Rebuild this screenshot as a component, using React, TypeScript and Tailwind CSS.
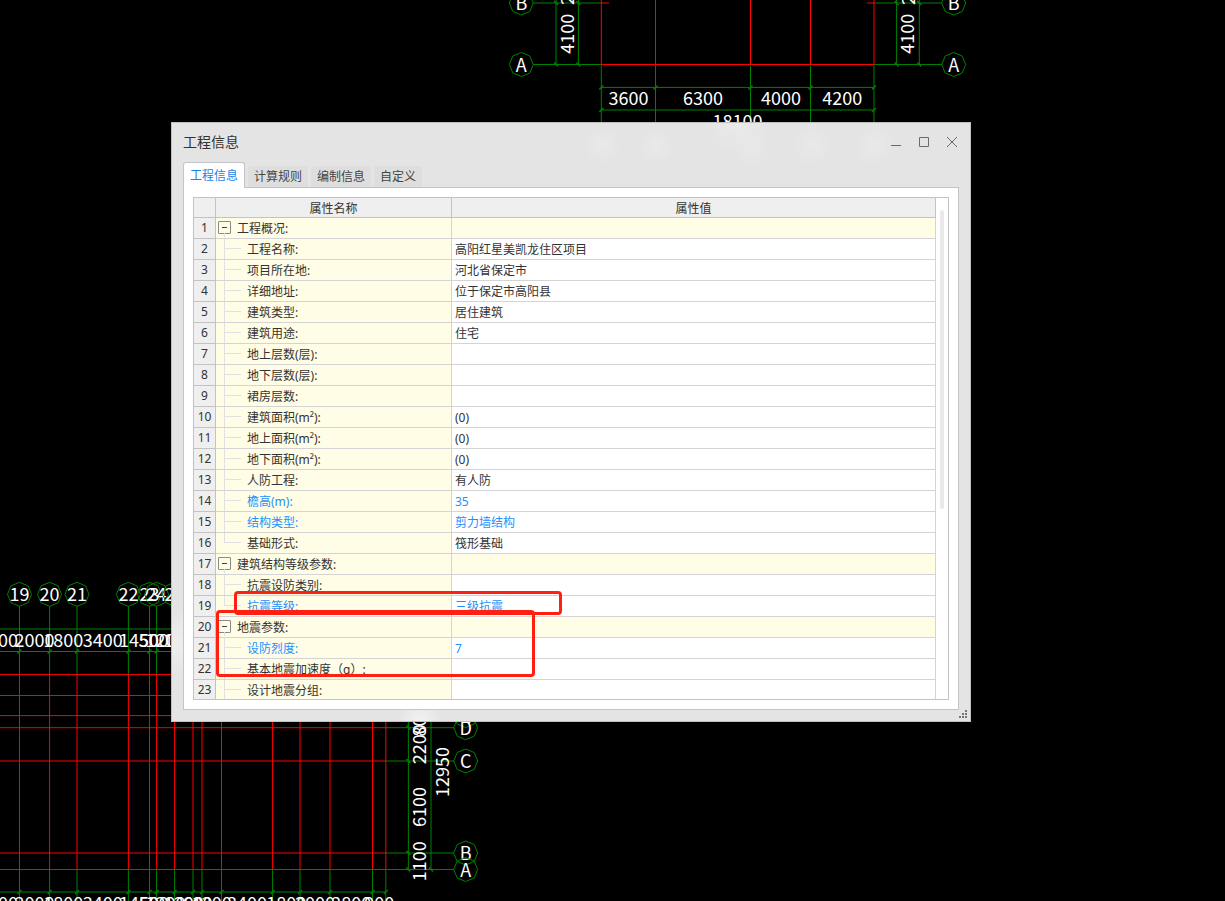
import { useState } from 'react'
import { clsx } from 'clsx'

interface PropertyRow {
  label: string
  value?: string
  group?: boolean
  highlight?: boolean
  last?: boolean
}

const tabs = ['工程信息', '计算规则', '编制信息', '自定义']

const rows: PropertyRow[] = [
  { label: '工程概况:', group: true },
  { label: '工程名称:', value: '高阳红星美凯龙住区项目' },
  { label: '项目所在地:', value: '河北省保定市' },
  { label: '详细地址:', value: '位于保定市高阳县' },
  { label: '建筑类型:', value: '居住建筑' },
  { label: '建筑用途:', value: '住宅' },
  { label: '地上层数(层):' },
  { label: '地下层数(层):' },
  { label: '裙房层数:' },
  { label: '建筑面积(m²):', value: '(0)' },
  { label: '地上面积(m²):', value: '(0)' },
  { label: '地下面积(m²):', value: '(0)' },
  { label: '人防工程:', value: '有人防' },
  { label: '檐高(m):', value: '35', highlight: true },
  { label: '结构类型:', value: '剪力墙结构', highlight: true },
  { label: '基础形式:', value: '筏形基础', last: true },
  { label: '建筑结构等级参数:', group: true },
  { label: '抗震设防类别:' },
  { label: '抗震等级:', value: '三级抗震', highlight: true, last: true },
  { label: '地震参数:', group: true },
  { label: '设防烈度:', value: '7', highlight: true },
  { label: '基本地震加速度（g）:' },
  { label: '设计地震分组:' },
]

const GREEN = '#008000'
const RED = '#ff0000'

const upperAxes = [601.3, 655.5, 750.5, 810.5, 874]
const lowerAxes = [19.5, 49.6, 77, 128.4, 149.5, 156.6, 174.6, 193, 202, 221.5, 272.6, 300, 330, 372.5, 385.8]
const lowerLevels = [674.4, 695.5, 715.6, 727.7, 761, 853, 869.5]
const axisNumbers = ['19', '20', '21', '22', '23', '24', '25']

const spans: [number, string][] = [
  [-2, '2000'],
  [34.5, '2000'],
  [63.3, '1800'],
  [102.7, '3400'],
  [139, '1450'],
  [153.5, '500'],
  [165.6, '1200'],
  [183.8, '1200'],
  [197.5, '600'],
  [211.7, '1300'],
  [247, '3400'],
  [286.3, '1800'],
  [315, '2000'],
  [351.2, '2800'],
  [379.2, '900'],
]

function Line({ x1, y1, x2, y2, color = GREEN }: { x1: number; y1: number; x2: number; y2: number; color?: string }) {
  return <line x1={x1} y1={y1} x2={x2} y2={y2} stroke={color} />
}

function Tick({ x, y, flip }: { x: number; y: number; flip?: boolean }) {
  const d = flip ? -2 : 2
  return <line x1={x - d} y1={y + 2} x2={x + d} y2={y - 2} stroke={GREEN} strokeWidth={1.4} />
}

function Bubble({ x, y, name }: { x: number; y: number; name: string }) {
  const points = Array.from({ length: 8 }, (_, i) => {
    const a = (i * Math.PI) / 4
    return `${x + 12 * Math.cos(a)},${y + 12 * Math.sin(a)}`
  }).join(' ')
  return (
    <g>
      <polygon points={points} fill="none" stroke={GREEN} />
      <Label x={x} y={y + 7}>{name}</Label>
    </g>
  )
}

function Label({ x, y, vertical, children }: { x: number; y: number; vertical?: boolean; children: string }) {
  return (
    <text x={x} y={y} textAnchor="middle" fill="#fff" transform={vertical ? `rotate(-90 ${x} ${y})` : undefined}>
      {children}
    </text>
  )
}

function UpperPlan() {
  return (
    <g>
      {[3, 64.5].map((y) => (
        <g key={y}>
          <Line x1={533} y1={y} x2={601} y2={y} />
          <Line x1={874} y1={y} x2={942} y2={y} />
          {[556, 578.4, 896.6, 919.3].map((x) => (
            <Tick key={x} x={x} y={y} flip />
          ))}
        </g>
      ))}
      {[556, 578.4, 896.6, 919.3].map((x) => (
        <Line key={x} x1={x} y1={0} x2={x} y2={65} />
      ))}
      <Line x1={601} y1={87.4} x2={874} y2={87.4} />
      <Line x1={601} y1={110} x2={874} y2={110} />
      {upperAxes.map((x) => (
        <g key={x}>
          <Line x1={x} y1={65} x2={x} y2={124} />
          <Line x1={x} y1={0} x2={x} y2={65} color={RED} />
          <Tick x={x} y={87.4} />
        </g>
      ))}
      <Tick x={601.3} y={110} />
      <Tick x={874} y={110} />
      <Line x1={601} y1={64.5} x2={874} y2={64.5} color={RED} />
      <Line x1={601} y1={3} x2={609} y2={3} color={RED} />
      <Line x1={867} y1={3} x2={874} y2={3} color={RED} />
      <Bubble x={521.3} y={3} name="B" />
      <Bubble x={521.3} y={64.5} name="A" />
      <Bubble x={953.7} y={3} name="B" />
      <Bubble x={953.7} y={64.5} name="A" />
      <Label x={628.4} y={105}>3600</Label>
      <Label x={703} y={105}>6300</Label>
      <Label x={781} y={105}>4000</Label>
      <Label x={842.3} y={105}>4200</Label>
      <Label x={737.5} y={127.5}>18100</Label>
      <Label x={574} y={33.8} vertical>4100</Label>
      <Label x={914.5} y={33.8} vertical>4100</Label>
      <Label x={574} y={-15} vertical>2200</Label>
      <Label x={914.5} y={-15} vertical>2200</Label>
    </g>
  )
}

function LowerPlan() {
  return (
    <g>
      <Line x1={0} y1={629} x2={386} y2={629} />
      <Line x1={0} y1={651.5} x2={386} y2={651.5} />
      <Line x1={0} y1={892} x2={386} y2={892} />
      {lowerAxes.map((x) => (
        <g key={x}>
          <Line x1={x} y1={606} x2={x} y2={674} />
          <Line x1={x} y1={870} x2={x} y2={901} />
          <Line x1={x} y1={674} x2={x} y2={870} color={RED} />
          <Tick x={x} y={651.5} />
          <Tick x={x} y={892} />
        </g>
      ))}
      {lowerLevels.map((y) => (
        <Line key={y} x1={0} y1={y} x2={386} y2={y} color={RED} />
      ))}
      {lowerLevels.slice(2).map((y) => (
        <g key={y}>
          <Line x1={386} y1={y} x2={454} y2={y} />
          <Tick x={408.4} y={y} flip />
        </g>
      ))}
      <Line x1={408.4} y1={700} x2={408.4} y2={870} />
      <Line x1={431} y1={700} x2={431} y2={870} />
      <Tick x={431} y={869.5} flip />
      {axisNumbers.map((name, i) => (
        <Bubble key={name} x={lowerAxes[i]} y={594.3} name={name} />
      ))}
      {spans.map(([x, text]) => (
        <g key={x}>
          <Label x={x} y={647}>{text}</Label>
          <Label x={x} y={909.5}>{text}</Label>
        </g>
      ))}
      <Bubble x={465.7} y={715.6} name="E" />
      <Bubble x={465.7} y={727.7} name="D" />
      <Bubble x={465.7} y={761} name="C" />
      <Bubble x={465.7} y={853} name="B" />
      <Bubble x={465.7} y={869.5} name="A" />
      <Label x={426} y={721.6} vertical>800</Label>
      <Label x={426} y={744.3} vertical>2200</Label>
      <Label x={426} y={807} vertical>6100</Label>
      <Label x={426} y={861.2} vertical>1100</Label>
      <Label x={449} y={772} vertical>12950</Label>
    </g>
  )
}

function WindowButtons() {
  return (
    <div className="flex">
      <button aria-label="最小化" className="flex h-6 w-7 items-center justify-center">
        <svg width="12" height="12" stroke="#6b6b6b" fill="none">
          <path d="M1 9.5h10" />
        </svg>
      </button>
      <button aria-label="最大化" className="flex h-6 w-7 items-center justify-center">
        <svg width="12" height="12" stroke="#6b6b6b" fill="none">
          <path d="M1.5 1.5h9v9h-9z" />
        </svg>
      </button>
      <button aria-label="关闭" className="flex h-6 w-7 items-center justify-center">
        <svg width="12" height="12" stroke="#6b6b6b" fill="none">
          <path d="M1 1l10 10M11 1L1 11" />
        </svg>
      </button>
    </div>
  )
}

function NameCell({ row }: { row: PropertyRow }) {
  if (row.group) {
    return (
      <div className="flex h-5 items-start pl-0.5">
        <button
          aria-label={`折叠 ${row.label}`}
          className="relative mt-[3px] flex size-[13px] items-center justify-center rounded-[1px] border border-[#8a8a8a] after:absolute after:top-full after:left-[5px] after:h-1 after:w-px after:bg-[#e0e0e0]"
        >
          <span className="h-px w-[5px] bg-[#444]" />
        </button>
        <span className="mt-0.5 ml-1.5 leading-[18px]">{row.label}</span>
      </div>
    )
  }
  return (
    <div className="flex h-5 items-start pl-2">
      <span className={clsx('h-5 w-[17px] border-[#e0e0e0]', !row.last && 'border-l')}>
        <span className={clsx('block h-[10px] border-b border-[#e0e0e0]', row.last && 'border-l')} />
      </span>
      <span className="mt-0.5 ml-1.5 leading-[18px]">{row.label}</span>
    </div>
  )
}

function PropertyTable() {
  return (
    <div className="flex h-[503px] overflow-hidden border border-[#c3c3c3]">
      <table className="w-full table-fixed border-separate border-spacing-0 text-xs leading-5">
        <colgroup>
          <col className="w-[22px]" />
          <col className="w-[236px]" />
          <col />
        </colgroup>
        <thead>
          <tr className="h-5 bg-[#efefef] leading-[17px]">
            <th aria-label="序号" className="border-r border-b border-[#c3c3c3] p-0" />
            <th className="border-r border-b border-[#c3c3c3] p-0 pt-0.5 font-normal">属性名称</th>
            <th className="border-r border-b border-[#c3c3c3] p-0 pt-0.5 font-normal">属性值</th>
          </tr>
        </thead>
        <tbody>
          {rows.map((row, i) => (
            <tr key={row.label} className="h-[21px]">
              <th scope="row" className="border-r border-b border-[#c3c3c3] bg-[#efefef] p-0 font-normal">
                {i + 1}
              </th>
              <td className={clsx('border-r border-b border-[#d4d4d4] bg-[#fffde6] p-0', row.highlight && 'text-[#1e90ff]')}>
                <NameCell row={row} />
              </td>
              <td
                className={clsx(
                  'border-r border-b border-[#d4d4d4] pt-0.5 pr-0 pb-0 pl-[3px] leading-[18px]',
                  row.group && 'bg-[#fffde6]',
                  row.highlight && 'text-[#1e90ff]'
                )}
              >
                {row.value}
              </td>
            </tr>
          ))}
        </tbody>
      </table>
      <div className="w-3 shrink-0 pt-3 pl-1">
        <div className="h-[299px] w-1 rounded-full bg-[#e9e9e9]" />
      </div>
    </div>
  )
}

function ProjectDialog() {
  const [activeTab, setActiveTab] = useState(tabs[0])

  return (
    <section
      aria-label="工程信息"
      className="relative border border-[#c0c0c0] bg-[#e4e4e4] bg-[radial-gradient(circle_at_430px_22px,#e9e9e9,transparent_20px),radial-gradient(circle_at_484px_22px,#e9e9e9,transparent_20px),radial-gradient(circle_at_565px_0px,#eaeaea,transparent_32px),radial-gradient(circle_at_580px_24px,#e8e8e8,transparent_22px),radial-gradient(circle_at_640px_22px,#e9e9e9,transparent_22px),radial-gradient(circle_at_702px_22px,#e9e9e9,transparent_22px),radial-gradient(circle_at_0px_520px,#efefef,transparent_34px),radial-gradient(circle_at_248px_598px,#f2f2f2,transparent_22px)] px-[11px] pb-[11px] text-[#333]"
    >
      <header className="-mr-[7px] flex h-[39px] items-center justify-between pb-0.5">
        <h1 className="text-sm">工程信息</h1>
        <WindowButtons />
      </header>
      <div role="tablist" className="flex items-end gap-[3px] text-xs">
        {tabs.map((tab) => (
          <button
            key={tab}
            role="tab"
            aria-selected={tab === activeTab}
            onClick={() => setActiveTab(tab)}
            className={clsx(
              'rounded-t-[3px]',
              tab === activeTab
                ? 'relative -mb-px h-[26px] border border-b-0 border-[#c3c3c8] bg-white px-1.5 text-[#1e82e6]'
                : 'h-[21px] bg-[#dedede] px-1.5 text-[#444]'
            )}
          >
            {tab}
          </button>
        ))}
      </div>
      <div role="tabpanel" className="border border-[#c3c3c8] bg-white p-[9px]">
        <PropertyTable />
      </div>

      <svg className="absolute right-0.5 bottom-0.5" width="9" height="9" fill="#70757d">
        <path d="M6 0h2v2h-2zM3 3h2v2h-2zM6 3h2v2h-2zM0 6h2v2h-2zM3 6h2v2h-2zM6 6h2v2h-2z" />
      </svg>

      {/* review marks */}
      <div className="pointer-events-none absolute top-[468px] left-[62px] h-6 w-[328px] rounded border-3 border-[#ff2012]" />
      <div className="pointer-events-none absolute top-[487px] left-[44px] h-[67px] w-[319px] rounded border-3 border-[#ff2012]" />
    </section>
  )
}

export default function App() {
  return (
    <main className="relative min-h-screen overflow-hidden bg-black pt-[122px] pr-[254px] pb-20 pl-[171px] font-['Noto_Sans','Noto_Sans_CJK_SC',sans-serif]">
      <svg
        aria-label="轴网图"
        className="absolute inset-0 size-full font-['Noto_Sans_CJK_SC',sans-serif] text-lg"
      >
        <UpperPlan />
        <LowerPlan />
      </svg>
      <ProjectDialog />
    </main>
  )
}
